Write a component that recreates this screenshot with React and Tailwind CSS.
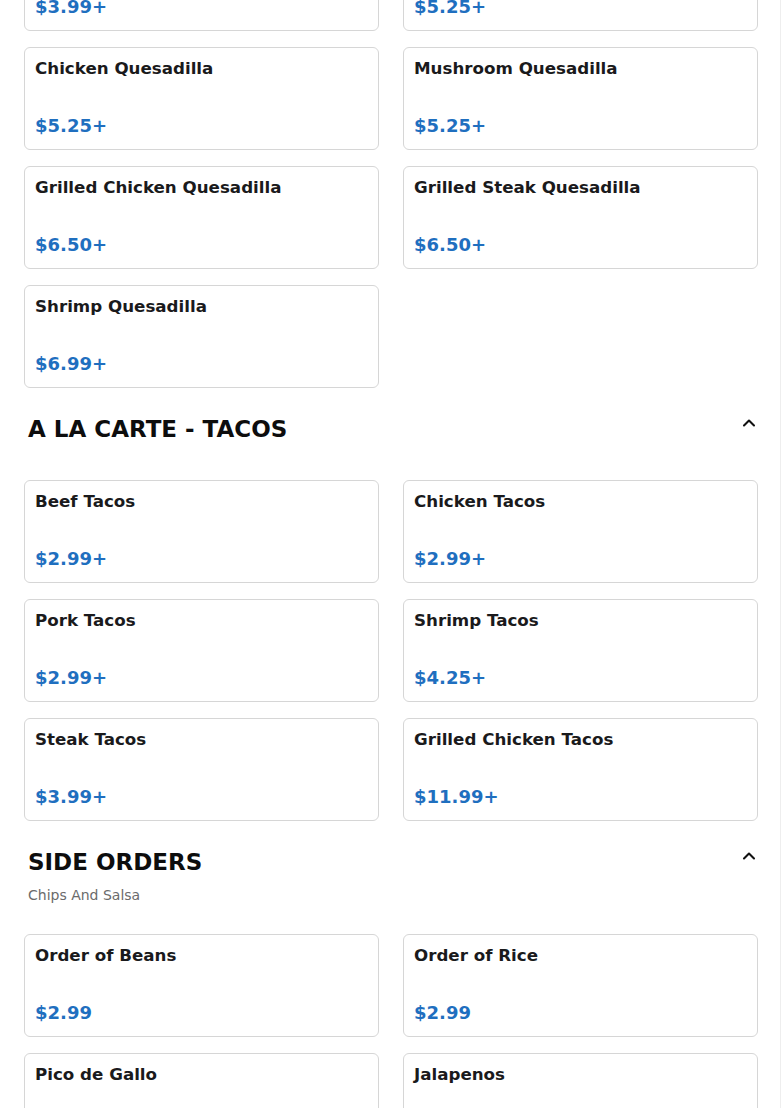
import React from "react";

const font = { fontFamily: '"DejaVu Sans", Verdana, sans-serif' };

function Chevron() {
  return (
    <button className="w-5 h-5 flex items-center justify-center mr-[-1px] text-[#111]">
      <svg width="20" height="20" viewBox="0 0 24 24" fill="none" stroke="currentColor" strokeWidth="2.5" strokeLinecap="round" strokeLinejoin="round">
        <path d="m18 15-6-6-6 6" />
      </svg>
    </button>
  );
}

function Card({ name, price }) {
  return (
    <div className="h-[103px] rounded-md border border-[#d6d6d6] bg-white pt-2 pb-[9px] px-[10px] flex flex-col justify-between">
      <div className="text-[16.7px] leading-6 font-bold text-[#1a1a1c]">{name}</div>
      <div className="text-[18px] leading-7 font-bold text-[#1f6fbf]">{price}</div>
    </div>
  );
}

function Grid({ items }) {
  return (
    <div className="grid grid-cols-2 gap-x-6 gap-y-4">
      {items.map((it, i) => (
        <Card key={i} name={it[0]} price={it[1]} />
      ))}
    </div>
  );
}

function Section({ title, subtitle, items }) {
  return (
    <section className="pt-[25px]">
      <div className="flex items-start justify-between pl-1">
        <div>
          <h2 className="text-[23px] leading-8 font-bold text-[#0d0d0d]">{title}</h2>
          {subtitle && (
            <p className="mt-[7px] text-[14px] leading-5 text-[#6b6b6b]">{subtitle}</p>
          )}
        </div>
        <Chevron />
      </div>
      <div className={subtitle ? "mt-[29px]" : "mt-[35px]"}>
        <Grid items={items} />
      </div>
    </section>
  );
}

export default function App() {
  const quesadillas = [
    ["Cheese Quesadilla", "$3.99+"],
    ["Beef Quesadilla", "$5.25+"],
    ["Chicken Quesadilla", "$5.25+"],
    ["Mushroom Quesadilla", "$5.25+"],
    ["Grilled Chicken Quesadilla", "$6.50+"],
    ["Grilled Steak Quesadilla", "$6.50+"],
    ["Shrimp Quesadilla", "$6.99+"],
  ];
  const tacos = [
    ["Beef Tacos", "$2.99+"],
    ["Chicken Tacos", "$2.99+"],
    ["Pork Tacos", "$2.99+"],
    ["Shrimp Tacos", "$4.25+"],
    ["Steak Tacos", "$3.99+"],
    ["Grilled Chicken Tacos", "$11.99+"],
  ];
  const sides = [
    ["Order of Beans", "$2.99"],
    ["Order of Rice", "$2.99"],
    ["Pico de Gallo", "$2.99"],
    ["Jalapenos", "$1.50"],
  ];
  return (
    <div className="h-[1108px] overflow-hidden bg-white flex" style={font}>
      <div className="w-[780px] pl-6 pr-[22px] shrink-0">
        <div className="-mt-[72px]">
          <Grid items={quesadillas} />
          <Section title="A LA CARTE - TACOS" items={tacos} />
          <Section title="SIDE ORDERS" subtitle="Chips And Salsa" items={sides} />
        </div>
      </div>
      <div className="w-px bg-[#eeeeee] shrink-0" />
      <div className="flex-1" />
    </div>
  );
}
